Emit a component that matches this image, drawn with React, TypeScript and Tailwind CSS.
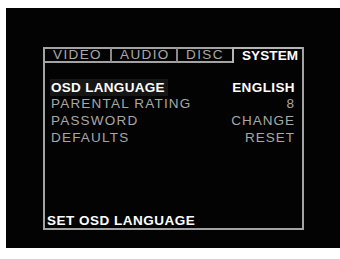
import React from 'react';

const tabs = [
  { label: 'VIDEO', w: 'w-[65px]' },
  { label: 'AUDIO', w: 'w-[66px]' },
  { label: 'DISC', w: 'w-[56px]' },
];

const rows = [
  { label: 'OSD LANGUAGE', value: 'ENGLISH', active: true },
  { label: 'PARENTAL RATING', value: '8', active: false },
  { label: 'PASSWORD', value: 'CHANGE', active: false },
  { label: 'DEFAULTS', value: 'RESET', active: false },
];

const App: React.FC = () => {
  return (
    <div className="w-[340px] h-[259px] bg-white pl-[6px] pt-[8px] pb-[11px] flex font-['Liberation_Sans',Arial,sans-serif]">
      <div className="flex-1 bg-[#030303] pl-[37px] pt-[39px]">
        <div className="w-[261px] h-[183px] flex flex-col border-l-2 border-r-2 border-b-2 border-[#a3a3a3]">
          {/* tab strip */}
          <div className="flex h-[16px]">
            {tabs.map((t, i) => (
              <div
                key={t.label}
                className={`${t.w} flex items-center border-t-2 border-b-2 border-[#a3a3a3] text-[13.5px] leading-none tracking-[1.4px] text-[#a9a9a9] ${i === 0 ? 'pl-[8px]' : 'pl-[8px] border-l-2 border-l-[#8a8a8a]'}`}
              >
                {t.label}
              </div>
            ))}
            <div className="flex-1 flex items-center border-t-2 border-l-2 border-[#b5b5b5] pl-[8px] text-[13.5px] leading-none font-bold tracking-[0.1px] text-white">
              SYSTEM
            </div>
          </div>

          {/* menu rows */}
          <div className="flex flex-col pt-[16px] pl-[5px] pr-[7px]">
            {rows.map((r) => (
              <div key={r.label} className="h-[16.7px] flex items-center justify-between text-[13.5px] leading-none">
                <span
                  className={
                    r.active
                      ? 'bg-[#161616] h-full flex items-center pl-[1px] pr-[3px] font-bold tracking-[0.3px] text-white'
                      : 'pl-[1px] tracking-[1.2px] text-[#a8a8a8]'
                  }
                >
                  {r.label}
                </span>
                <span className={r.active ? 'font-bold tracking-[0.4px] text-white' : 'tracking-[1px] text-[#a8a8a8]'}>
                  {r.value}
                </span>
              </div>
            ))}
          </div>

          {/* status line */}
          <div className="mt-auto pl-[2px] pb-[1px] text-[13.5px] leading-none font-bold tracking-[0.5px] text-white">
            SET OSD LANGUAGE
          </div>
        </div>
      </div>
    </div>
  );
};

export default App;
